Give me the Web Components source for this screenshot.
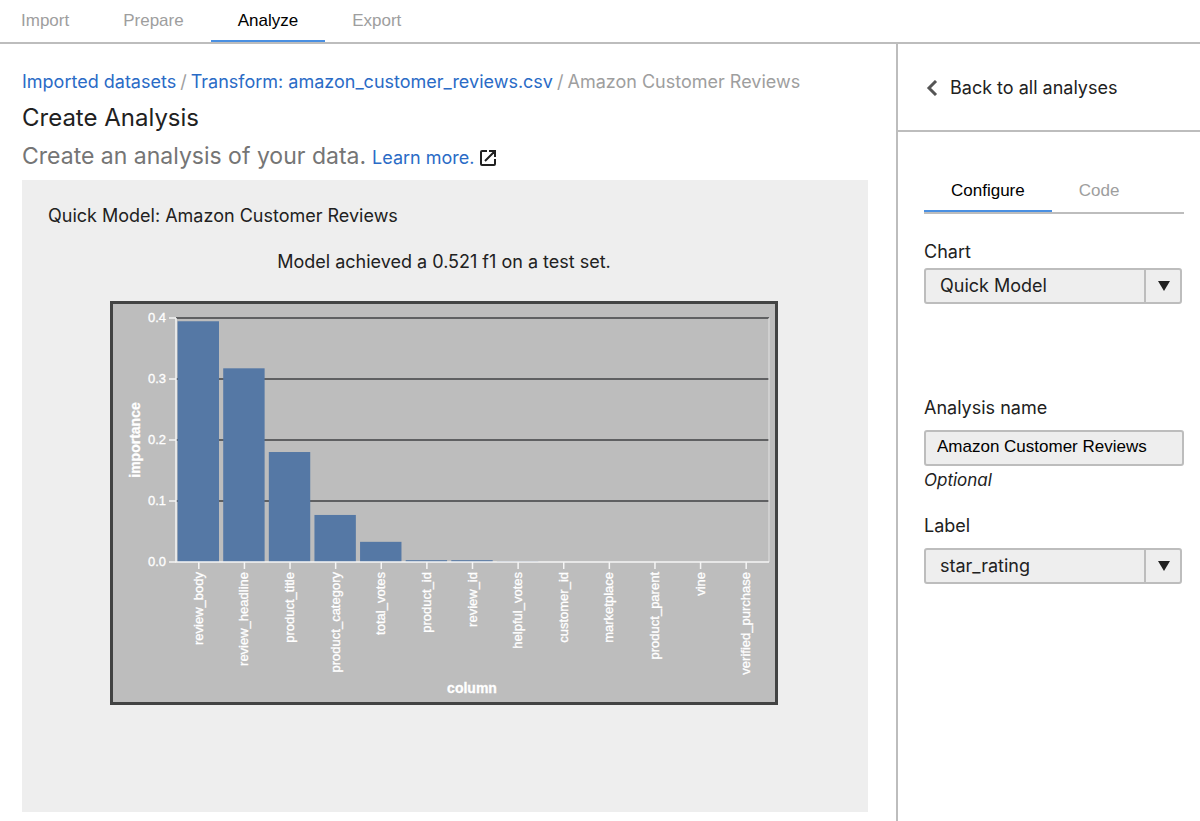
<!DOCTYPE html>
<html lang="en">
<head>
<meta charset="utf-8">
<meta name="viewport" content="width=device-width, initial-scale=1">
<title>Create Analysis</title>
<style>
  :root {
    --line: #bdbdbd;
    --accent: #4a90e2;
    --link: #2a6bc6;
    --ink: #212121;
    --muted: #9e9e9e;
    --surface: #eeeeee;
    --ui: Inter, "Liberation Sans", sans-serif;
    --plain: "Liberation Sans", Arial, sans-serif;
  }
  body { margin: 0; background: #fff; color: var(--ink); font: 18px/20px var(--ui); }
</style>
</head>
<body>
<analysis-app></analysis-app>

<script>
class ShadowElement extends HTMLElement {
  connectedCallback() {
    if (this.shadowRoot) return;
    this.attachShadow({ mode: 'open' }).innerHTML =
      `<style>*{box-sizing:border-box}</style>` + this.render();
  }
}

/* A row of tabs; the entry named by "selected" gets the accent underline. */
customElements.define('tab-row', class extends ShadowElement {
  render() {
    const selected = this.getAttribute('selected');
    const tabs = this.getAttribute('tabs').split(',').map(t =>
      `<button type="button" role="tab" aria-selected="${t === selected}">${t}</button>`).join('');
    return `<style>
      :host { display: block; border-bottom: 2px solid var(--line); }
      div { display: flex; }
      button { appearance: none; border: 0; border-bottom: 2px solid transparent; background: none;
        margin: 0; padding: 11px 27px 9px; font: 17px/20px var(--plain); color: var(--muted); cursor: pointer; }
      button[aria-selected="true"] { color: #000; border-color: var(--accent); }
      :host([flush]) button:first-child { padding-left: 21px; }
    </style><div role="tablist">${tabs}</div>`;
  }
});

customElements.define('crumb-trail', class extends ShadowElement {
  render() {
    return `<style>
      :host { display: block; color: var(--muted); }
      nav { display: flex; flex-wrap: wrap; gap: 4px; }
      a { color: var(--link); text-decoration: none; }
    </style>
    <nav aria-label="Breadcrumb">
      <a href="#datasets">Imported datasets</a><span>/</span>
      <a href="#transform">Transform: amazon_customer_reviews.csv</a><span>/</span>
      <span>Amazon Customer Reviews</span>
    </nav>`;
  }
});

customElements.define('page-intro', class extends ShadowElement {
  render() {
    return `<style>
      :host { display: block; }
      h1 { margin: 0; font-size: 24px; line-height: 32px; font-weight: 400; }
      p { margin: 6px 0 0; display: flex; align-items: baseline; gap: 6px;
        font-size: 23px; line-height: 32px; color: #757575; }
      a { display: inline-flex; align-items: center; gap: 4px; font-size: 18px; line-height: 20px;
        color: var(--link); text-decoration: none; }
      svg { color: var(--ink); }
    </style>
    <h1><slot name="title"></slot></h1>
    <p><slot></slot><a href="#learn">Learn more.
      <svg width="18" height="18" viewBox="0 0 18 18" fill="none" stroke="currentColor" stroke-width="2" aria-hidden="true">
        <path d="M8 2H3Q2 2 2 3V15Q2 16 3 16H15Q16 16 16 15V10M10 2H16V8M16 2L6 12"/>
      </svg></a></p>`;
  }
});

/* Bar chart of feature importance, drawn on a 668 x 404 canvas. */
customElements.define('importance-chart', class extends ShadowElement {
  render() {
    const data = [['review_body', .394], ['review_headline', .317], ['product_title', .18],
      ['product_category', .077], ['total_votes', .033], ['product_id', .003], ['review_id', .003],
      ['helpful_votes', .0008], ['customer_id', 0], ['marketplace', 0], ['product_parent', 0],
      ['vine', 0], ['verified_purchase', 0]];
    const left = 66, right = 659, base = 261, unit = 611, step = (right - left) / data.length;
    let grid = '', bars = '', ticks = '';
    for (let i = 0; i <= 4; i++) {
      const y = base - i * 61;
      if (i) grid += `<path class="grid" d="M${left} ${y}H${right}"/>`;
      ticks += `<path class="axis" d="M${left - 7} ${y}H${left}"/><text x="56" y="${y + 4}" text-anchor="end">${(i / 10).toFixed(1)}</text>`;
    }
    data.forEach(([name, value], i) => {
      const x = left + i * step, mid = x + step / 2, h = value * unit;
      if (value) bars += `<rect x="${x + 1.6}" y="${base - h}" width="41.4" height="${h}"/>`;
      ticks += `<path class="axis" d="M${mid} ${base}v7"/><text transform="translate(${mid + 4} 271) rotate(-90)" text-anchor="end">${name}</text>`;
    });
    return `<style>
      :host { display: block; width: 100%; max-width: 668px; }
      svg { display: block; width: 100%; height: auto; background: #bdbdbd; }
      text { font: 13px var(--plain); fill: #fff; stroke: #fff; stroke-width: .3px; }
      .name { font-size: 14px; font-weight: 700; }
      rect { fill: #5578a5; }
      .frame { fill: none; stroke: #424343; stroke-width: 3; }
      .grid { stroke: #414244; stroke-width: 1.6; }
      .axis { stroke: #f5f5f5; stroke-width: 1.5; fill: none; }
      .edge { stroke: #dcdcdc; stroke-width: 1.2; fill: none; }
    </style>
    <svg viewBox="0 0 668 404" role="img" aria-label="Importance by column">
      ${grid}<path class="edge" d="M${right} 17V${base}"/>${bars}
      <path class="axis" d="M${left} 17V${base}H${right}"/>${ticks}
      <text class="name" transform="translate(30 139) rotate(-90)" text-anchor="middle">importance</text>
      <text class="name" x="362" y="392" text-anchor="middle">column</text>
      <rect class="frame" x="1.5" y="1.5" width="665" height="401"/>
    </svg>`;
  }
});

customElements.define('result-panel', class extends ShadowElement {
  render() {
    return `<style>
      :host { display: flex; flex-direction: column; align-items: center; background: var(--surface);
        padding: 26px 28px 107px 26px; }
      h2, p { margin: 0; font: inherit; }
      h2 { align-self: stretch; }
      p { margin: 26px 0 29px; text-align: center; }
    </style>
    <h2><slot name="title"></slot></h2><p><slot name="summary"></slot></p><slot></slot>`;
  }
});

customElements.define('select-field', class extends ShadowElement {
  render() {
    return `<style>
      :host { display: block; margin-right: 2px; }
      label { display: block; margin-bottom: var(--label-gap, 12px); }
      .box { display: grid; grid-template-columns: 1fr 38px; height: 36px; }
      select { grid-area: 1 / 1 / 2 / 3; appearance: none; width: 100%; margin: 0; padding: 0 48px 0 14px;
        border: 2px solid var(--line); border-radius: 3px; background: var(--surface); color: inherit; font: inherit; }
      .arrow { grid-area: 1 / 2 / 2 / 3; display: grid; place-items: center; pointer-events: none;
        border-left: 2px solid var(--line); z-index: 1; }
    </style>
    <label for="control">${this.getAttribute('label')}</label>
    <div class="box">
      <select id="control"><option>${this.getAttribute('value')}</option></select>
      <span class="arrow"><svg width="12" height="10" viewBox="0 0 12 10" aria-hidden="true"><path d="M0 0H12L6 10Z" fill="#212121"/></svg></span>
    </div>`;
  }
});

customElements.define('text-field', class extends ShadowElement {
  render() {
    return `<style>
      :host { display: block; }
      label { display: block; margin-bottom: 12px; }
      input { display: block; width: 100%; height: 36px; margin: 0; padding: 0 11px 2px; border: 2px solid var(--line);
        border-radius: 3px; background: var(--surface); color: #000; font: 17px/20px var(--plain); }
      small { display: block; margin-top: 4px; font-size: 17px; line-height: 20px; font-style: italic; }
    </style>
    <label for="control">${this.getAttribute('label')}</label>
    <input id="control" type="text" value="${this.getAttribute('value')}" aria-describedby="hint">
    <small id="hint">${this.getAttribute('hint')}</small>`;
  }
});

customElements.define('config-sidebar', class extends ShadowElement {
  render() {
    return `<style>
      :host { display: block; border-left: 2px solid var(--line); }
      .back { display: flex; align-items: center; gap: 12px; padding: 34px 28px 32px;
        border-bottom: 2px solid var(--line); color: inherit; text-decoration: none; }
      .body { padding: 38px 16px 24px 26px; }
      form { display: grid; padding-top: 28px; }
      .chart { --label-gap: 6px; margin-bottom: 94px; }
      text-field { margin-bottom: 26px; }
    </style>
    <a class="back" href="#analyses">
      <svg width="12" height="16" viewBox="0 0 12 16" fill="none" stroke="#555" stroke-width="3" aria-hidden="true"><path d="M10 1L3 8L10 15"/></svg>
      Back to all analyses</a>
    <div class="body">
      <tab-row tabs="Configure,Code" selected="Configure"></tab-row>
      <form>
        <select-field class="chart" label="Chart" value="Quick Model"></select-field>
        <text-field label="Analysis name" value="Amazon Customer Reviews" hint="Optional"></text-field>
        <select-field label="Label" value="star_rating"></select-field>
      </form>
    </div>`;
  }
});

customElements.define('analysis-app', class extends ShadowElement {
  render() {
    return `<style>
      :host { display: grid; grid-template: auto 1fr / minmax(0, 1fr) 304px; min-height: 100vh; }
      header { grid-column: 1 / 3; }
      main { padding: 28px 28px 9px 22px; }
      page-intro { margin: 10px 0 8px; }
    </style>
    <header><tab-row flush tabs="Import,Prepare,Analyze,Export" selected="Analyze"></tab-row></header>
    <main>
      <crumb-trail></crumb-trail>
      <page-intro><span slot="title">Create Analysis</span>Create an analysis of your data.</page-intro>
      <result-panel>
        <span slot="title">Quick Model: Amazon Customer Reviews</span>
        <span slot="summary">Model achieved a 0.521 f1 on a test set.</span>
        <importance-chart></importance-chart>
      </result-panel>
    </main>
    <config-sidebar></config-sidebar>`;
  }
});
</script>
</body>
</html>
